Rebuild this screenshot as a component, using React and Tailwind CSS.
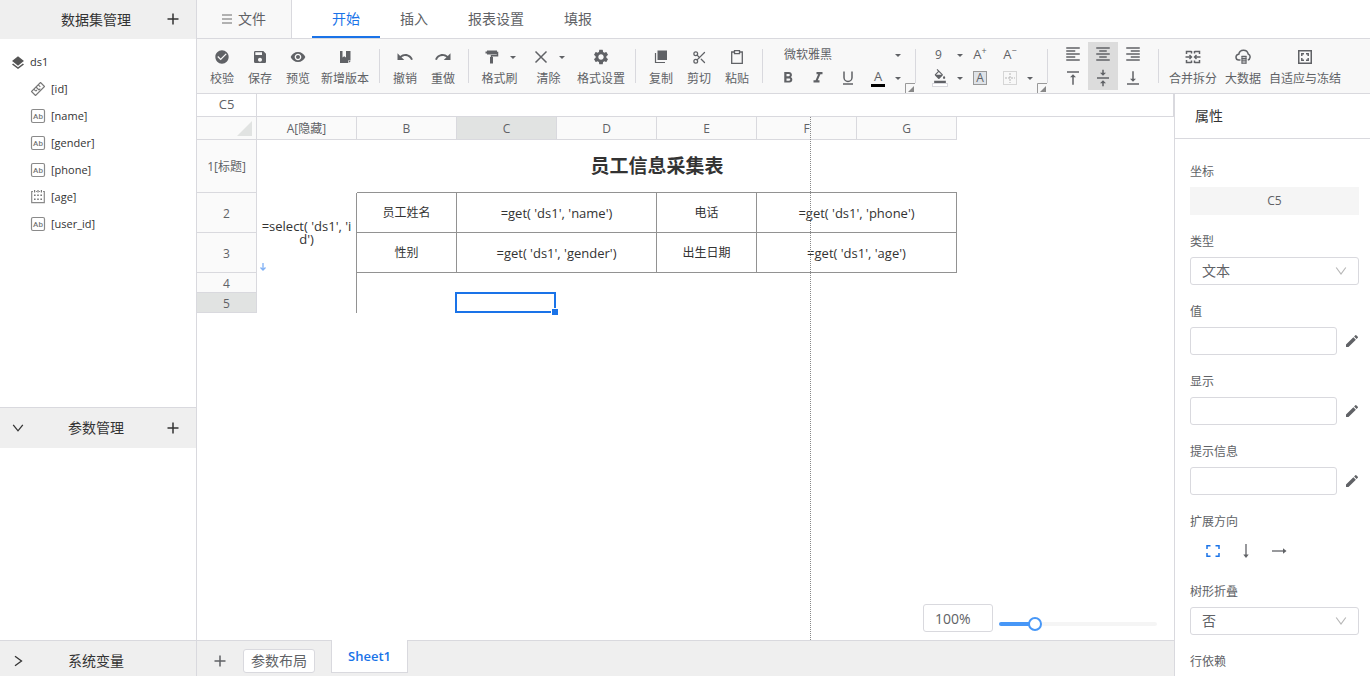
import React from "react";
import {
  MdCheckCircle,
  MdSave,
  MdVisibility,
  MdUndo,
  MdRedo,
  MdSettings,
  MdLayers,
  MdEdit,
  MdFormatAlignLeft,
  MdFormatAlignCenter,
  MdFormatAlignRight,
  MdVerticalAlignTop,
  MdVerticalAlignCenter,
  MdVerticalAlignBottom,
  MdFormatBold,
  MdFormatItalic,
  MdFormatColorFill,
} from "react-icons/md";
import { Scissors } from "lucide-react";

function Svg({ children, className = "size-4", box = 16 }) {
  return (
    <svg
      viewBox={`0 0 ${box} ${box}`}
      className={className}
      fill="none"
      stroke="currentColor"
      strokeWidth="1.5"
      aria-hidden="true"
    >
      {children}
    </svg>
  );
}

const PlusIcon = () => (
  <Svg className="size-3" box={12}>
    <path d="M6 0.5v11M0.5 6h11" />
  </Svg>
);

const Caret = () => (
  <svg viewBox="0 0 6 3" className="h-[3px] w-1.5 shrink-0" fill="currentColor" aria-hidden="true">
    <path d="M0 0h6L3 3z" />
  </svg>
);

const VersionIcon = () => (
  <Svg>
    <path fill="currentColor" stroke="none" d="M3 2h2.500v6.500L7.200 7.200 9 8.500V2h4.500v9.500h-2.500V14H3z" />
    <path fill="currentColor" stroke="none" d="M11.700 14v-2h2z" />
  </Svg>
);

const RollerIcon = () => (
  <Svg>
    <path fill="currentColor" stroke="none" d="M3 1.500h10v4H3zM1.500 2.500h2v2h-2zM6 8h3v6.500H6z" />
    <path d="M12.500 3.500h1v3.250h-6v2" />
  </Svg>
);

const ClearIcon = () => (
  <Svg>
    <path d="M2.500 2.500l11 11M13.500 2.500l-11 11" />
  </Svg>
);

const CopyIcon = () => (
  <Svg>
    <path fill="currentColor" stroke="none" d="M4.500 1.500H14V11H4.500z" />
    <path strokeWidth="1.200" d="M2.500 4v9.500h9.500" />
  </Svg>
);

const PasteIcon = () => (
  <Svg>
    <path strokeWidth="1.300" d="M5 3H2.700v11.300h10.600V3H11" />
    <path strokeWidth="1.300" d="M5.500 1.700h5v3h-5z" />
  </Svg>
);

const MergeIcon = () => (
  <Svg>
    <path d="M1.500 5V2.500h5M9.500 2.500h5V5M1.500 11v2.500h5M9.500 13.500h5V11" />
    <path strokeWidth="1.400" d="M0.500 8h5.500M15.500 8H10M4.500 6l2 2-2 2M11.500 6l-2 2 2 2" />
    <path d="M6.500 2v2.500M9.500 2v2.500M6.500 14v-2.500M9.500 14v-2.500" />
  </Svg>
);

const CloudIcon = () => (
  <Svg>
    <path d="M5.500 11H4a2.900 2.900 0 0 1-.2-5.800A4.800 4.800 0 0 1 13.200 5a3.200 3.200 0 0 1-.4 6" />
    <path strokeWidth="1.400" d="M6.500 7.500h5M6.500 9.700h5M6.500 11.900h5M6.500 14.100h5" />
    <path strokeWidth="1" d="M7 7v7.500M11 7v7.500" />
  </Svg>
);

const FitIcon = () => (
  <Svg>
    <path d="M1.750 1.750h12.500v12.500H1.750z" />
    <path d="M4.800 7V4.800H7M9 4.800h2.200V7M4.800 9v2.200H7M9 11.200h2.200V9" />
  </Svg>
);

const AbIcon = () => (
  <svg viewBox="0 0 16 16" className="mb-px size-4" aria-hidden="true">
    <rect x="1.500" y="1.500" width="13" height="13" rx="1.500" fill="none" stroke="#8a8a8a" strokeWidth="1.200" />
    <text x="8" y="11" textAnchor="middle" fontSize="8" fontFamily="Roboto, sans-serif" fontWeight="500" fill="#777">
      Ab
    </text>
  </svg>
);

const TagIcon = () => (
  <Svg className="mb-px size-4">
    <g stroke="#777" strokeWidth="1.100" strokeLinejoin="round">
      <path d="M10.500 1.500l4 4-9 9L1.500 10.500z" />
      <path d="M3.800 8.200l2 2M6 6l3 3M8.300 3.800l2 2" />
      <path d="M5.800 10.200l1.200-1.200M9 9l1.300-1.300" />
    </g>
  </Svg>
);

const NumberIcon = () => (
  <svg viewBox="0 0 16 16" className="mb-px size-4" aria-hidden="true">
    <path
      d="M3 2.500H1.700v11.200h12.600V2.500H13M6 2.500h1M9 2.500h1"
      fill="none"
      stroke="#8a8a8a"
      strokeWidth="1.200"
    />
    <g fill="#777">
      <path d="M4 1h1.200v2.500H4zM7.400 1h1.200v2.500H7.400zM10.800 1H12v2.500h-1.200z" />
      <path d="M4 5.500h1.600v1.600H4zM7.200 5.500h1.600v1.600H7.200zM10.400 5.500H12v1.600h-1.600zM4 9.500h1.600v1.600H4zM7.200 9.500h1.600v1.600H7.200zM10.400 9.500H12v1.600h-1.600z" />
    </g>
  </svg>
);

const UnderlineIcon = () => (
  <Svg>
    <path d="M4 1.500v6a4 4 0 0 0 8 0v-6M3 14h10" />
  </Svg>
);

const ChevronDown = ({ className }) => (
  <Svg className={className} box={12}>
    <path strokeWidth="1.200" d="M1.200 2.500L6 9l4.800-6.500" />
  </Svg>
);

const FoldIcon = () => (
  <Svg className="size-3" box={12}>
    <path strokeWidth="1.300" d="M1.200 2.800L6 8.800l4.800-6" />
  </Svg>
);

const ChevronRight = () => (
  <Svg className="size-3" box={12}>
    <path strokeWidth="1.300" d="M3 1.200L9.500 6 3 10.800" />
  </Svg>
);

const Separator = () => <div className="mx-1.5 h-[34px] w-px shrink-0 bg-[#d9d9de]" />;

function Tool({ icon, label, width = "min-w-[38px]", caret = false }) {
  return (
    <button className={`flex shrink-0 flex-col items-center gap-1 px-1 pt-1.5 ${width}`}>
      <span className="flex h-4 items-center gap-2.5">
        {icon}
        {caret && <Caret />}
      </span>
      <span className="whitespace-nowrap text-xs leading-5">{label}</span>
    </button>
  );
}

function Small({ label, children, active = false }) {
  return (
    <button
      aria-label={label}
      className={`flex h-6 w-[30px] shrink-0 items-center justify-center ${active ? "bg-[#dcdcdc]" : ""}`}
    >
      {children}
    </button>
  );
}

function CaretButton({ label }) {
  return (
    <button aria-label={label} className="flex h-6 w-2.5 shrink-0 items-center justify-center">
      <Caret />
    </button>
  );
}

function Launcher({ label }) {
  return (
    <button aria-label={label} className="absolute right-0 bottom-0">
      <svg viewBox="0 0 10 10" className="size-2.5" aria-hidden="true">
        <path d="M0.500 10V0.500H10" fill="none" stroke="#999" />
        <path d="M9 3v6H3z" fill="#888" />
      </svg>
    </button>
  );
}

const fields = [
  { name: "[id]", icon: <TagIcon /> },
  { name: "[name]", icon: <AbIcon /> },
  { name: "[gender]", icon: <AbIcon /> },
  { name: "[phone]", icon: <AbIcon /> },
  { name: "[age]", icon: <NumberIcon /> },
  { name: "[user_id]", icon: <AbIcon /> },
];

function Sidebar() {
  return (
    <aside className="flex w-[197px] shrink-0 flex-col border-r border-[#d9d9de] text-[#333]">
      <div className="grid h-[39px] shrink-0 grid-cols-[36px_1fr_46px] items-center bg-[#efefef]">
        <span />
        <h2 className="pl-1.5 text-center text-sm">数据集管理</h2>
        <button aria-label="新增数据集" className="flex justify-center pb-0.5">
          <PlusIcon />
        </button>
      </div>
      <div className="min-h-0 flex-1 overflow-hidden pt-2.5">
        <div className="flex h-[27px] items-center gap-1 pl-2.5 text-[11px]">
          <MdLayers className="size-4 text-[#555]" />
          ds1
        </div>
        <ul>
          {fields.map((f) => (
            <li key={f.name} className="flex h-[27px] items-center gap-[5px] pl-[30px] text-[11px]">
              {f.icon}
              <span>{f.name}</span>
            </li>
          ))}
        </ul>
      </div>
      <div className="grid h-[41px] shrink-0 grid-cols-[36px_1fr_46px] items-center border-t border-[#d9d9de] bg-[#efefef]">
        <button aria-label="折叠" className="flex justify-center">
          <FoldIcon />
        </button>
        <h2 className="pl-1.5 text-center text-sm">参数管理</h2>
        <button aria-label="新增参数" className="flex justify-center">
          <PlusIcon />
        </button>
      </div>
      <div className="h-48 shrink-0" />
      <div className="grid h-9 shrink-0 grid-cols-[36px_1fr_46px] items-start border-t border-[#d9d9de] bg-[#efefef] pt-2.5">
        <button aria-label="展开" className="flex h-5 items-center justify-center">
          <ChevronRight />
        </button>
        <h2 className="pl-1.5 text-center text-sm leading-5">系统变量</h2>
        <span />
      </div>
    </aside>
  );
}

function Tabs() {
  return (
    <nav className="flex h-[39px] shrink-0 border-b border-[#d9d9de] text-sm text-[#606266]">
      <button className="mr-5 flex w-[95px] items-center justify-center gap-1.5 border-r border-[#d9d9de] bg-[#f8f8f8]">
        <Svg className="size-2.5 text-[#999]" box={10}>
          <path d="M0 1h10M0 5h10M0 9h10" />
        </Svg>
        文件
      </button>
      <button className="border-b-2 border-[#1a73e8] px-5 pt-0.5 text-[#1a73e8]">开始</button>
      <button className="px-5">插入</button>
      <button className="px-5">报表设置</button>
      <button className="px-5">填报</button>
    </nav>
  );
}

function Toolbar() {
  return (
    <div className="flex h-[55px] shrink-0 items-center overflow-hidden border-b border-[#d9d9de] bg-[#f8f8f8] pl-1.5 text-[#606266]">
      <Tool icon={<MdCheckCircle className="size-4" />} label="校验" />
      <Tool icon={<MdSave className="size-4" />} label="保存" />
      <Tool icon={<MdVisibility className="size-4" />} label="预览" />
      <Tool icon={<VersionIcon />} label="新增版本" />
      <Separator />
      <Tool icon={<MdUndo className="size-[18px]" />} label="撤销" />
      <Tool icon={<MdRedo className="size-[18px]" />} label="重做" />
      <Separator />
      <Tool icon={<RollerIcon />} label="格式刷" width="w-[49px]" caret />
      <Tool icon={<ClearIcon />} label="清除" width="w-[49px]" caret />
      <Tool icon={<MdSettings className="size-[18px]" />} label="格式设置" />
      <Separator />
      <Tool icon={<CopyIcon />} label="复制" />
      <Tool icon={<Scissors className="size-[15px]" />} label="剪切" />
      <Tool icon={<PasteIcon />} label="粘贴" />
      <Separator />

      <div className="relative flex h-[54px] w-[146px] shrink-0 flex-col justify-center pl-1">
        <div className="flex h-6 items-center pt-0.5">
          <select aria-label="字体" className="w-30 appearance-none bg-transparent pl-[11px] text-xs">
            <option>微软雅黑</option>
          </select>
          <span className="flex w-2.5 justify-center">
            <Caret />
          </span>
        </div>
        <div className="flex h-6 items-center">
          <Small label="加粗">
            <MdFormatBold className="size-[18px]" />
          </Small>
          <Small label="斜体">
            <MdFormatItalic className="size-[18px]" />
          </Small>
          <Small label="下划线">
            <UnderlineIcon />
          </Small>
          <Small label="字体颜色">
            <span className="border-b-3 border-black px-[3px] text-[13px] leading-[15px]">A</span>
          </Small>
          <CaretButton label="更多字体颜色" />
        </div>
        <Launcher label="字体设置" />
      </div>
      <div className="h-[34px] w-px shrink-0 bg-[#d9d9de]" />
      <div className="relative flex h-[54px] w-[131px] shrink-0 flex-col justify-center pl-[9px]">
        <div className="flex h-6 items-center pt-0.5">
          <select aria-label="字号" className="w-[30px] appearance-none bg-transparent pl-2.5 text-xs">
            <option>9</option>
          </select>
          <span className="flex w-2.5 justify-center">
            <Caret />
          </span>
          <Small label="增大字号">
            <span className="text-[13px]">A</span>
            <sup className="text-[9px]">+</sup>
          </Small>
          <Small label="减小字号">
            <span className="text-[13px]">A</span>
            <sup className="text-[9px]">−</sup>
          </Small>
        </div>
        <div className="flex h-6 items-center">
          <Small label="填充颜色">
            <span className="flex flex-col items-center">
              <MdFormatColorFill className="size-3.5" />
              <span className="h-1 w-4 border border-[#d9d9de] bg-white" />
            </span>
          </Small>
          <CaretButton label="更多填充颜色" />
          <Small label="背景">
            <span className="flex size-3.5 items-center justify-center border border-[#999] bg-[#dfe3e8] text-xs">A</span>
          </Small>
          <Small label="边框">
            <Svg className="size-3.5 text-[#b5b5b5]" box={14}>
              <path strokeWidth="1" strokeDasharray="1 1" d="M.5.5h13v13H.5z" />
              <path strokeWidth="1" strokeDasharray="2 1" d="M7 2v10M2 7h10" />
            </Svg>
          </Small>
          <CaretButton label="更多边框" />
        </div>
        <Launcher label="单元格设置" />
      </div>
      <div className="mr-2.5 h-[34px] w-px shrink-0 bg-[#d9d9de]" />
      <div className="grid shrink-0 grid-cols-3">
        <Small label="左对齐">
          <MdFormatAlignLeft className="size-[18px]" />
        </Small>
        <Small label="居中对齐" active>
          <MdFormatAlignCenter className="size-[18px]" />
        </Small>
        <Small label="右对齐">
          <MdFormatAlignRight className="size-[18px]" />
        </Small>
        <Small label="顶端对齐">
          <MdVerticalAlignTop className="size-[18px]" />
        </Small>
        <Small label="垂直居中" active>
          <MdVerticalAlignCenter className="size-[18px]" />
        </Small>
        <Small label="底端对齐">
          <MdVerticalAlignBottom className="size-[18px]" />
        </Small>
      </div>
      <div className="ml-1 flex items-center">
        <Separator />
        <Tool icon={<MergeIcon />} label="合并拆分" />
        <Tool icon={<CloudIcon />} label="大数据" />
        <Tool icon={<FitIcon />} label="自适应与冻结" />
      </div>
    </div>
  );
}

const columns = ["A[隐藏]", "B", "C", "D", "E", "F", "G"];
const boxed = "border-r border-b border-[#929292] p-0";

function RowHead({ children, active = false }) {
  return (
    <th
      scope="row"
      className={`border-r border-b border-[#d9d9de] p-0 pt-0.5 font-normal text-[#606266] ${active ? "bg-[#e1e3e2]" : "bg-[#fafafa]"}`}
    >
      {children}
    </th>
  );
}

function Formula({ children }) {
  return <span className="block text-[13px] leading-4">{children}</span>;
}

function Sheet() {
  return (
    <table className="w-[760px] table-fixed border-separate border-spacing-0 text-center text-xs text-[#333]">
      <colgroup>
        <col className="w-[60px]" />
        {columns.map((c) => (
          <col key={c} className="w-[100px]" />
        ))}
      </colgroup>
      <thead>
        <tr className="h-[23px] text-[#606266]">
          <td className="border-r border-b border-[#d9d9de] bg-[#fafafa] p-0">
            <svg viewBox="0 0 15 15" className="mr-1 ml-auto size-[15px] text-[#e1e3e2]" fill="currentColor" aria-hidden="true">
              <path d="M15 0v15H0z" />
            </svg>
          </td>
          {columns.map((c) => (
            <th
              key={c}
              scope="col"
              className={`border-r border-b border-[#d9d9de] p-0 pt-0.5 font-normal ${c === "C" ? "bg-[#e1e3e2]" : "bg-[#fafafa]"}`}
            >
              {c}
            </th>
          ))}
        </tr>
      </thead>
      <tbody>
        <tr className="h-[53px]">
          <RowHead>1[标题]</RowHead>
          <td className="p-0" />
          <td colSpan={6} className="border-b border-[#929292] p-0 pt-0.5 text-[19px] font-bold">
            员工信息采集表
          </td>
        </tr>
        <tr className="h-10">
          <RowHead>2</RowHead>
          <td rowSpan={2} className="relative border-r border-[#929292] p-0 px-1 text-[13px] leading-[13px] break-all">
            =select( 'ds1', 'id')
            <svg viewBox="0 0 8 8" className="absolute bottom-0.5 left-0.5 size-2" fill="none" stroke="#7fb0f5" strokeWidth="1.3" aria-hidden="true">
              <path d="M4 0v7M1.500 4.500L4 7l2.500-2.500" />
            </svg>
          </td>
          <td className={boxed}>员工姓名</td>
          <td colSpan={2} className={boxed}>
            <Formula>=get( 'ds1', 'name')</Formula>
          </td>
          <td className={boxed}>电话</td>
          <td colSpan={2} className={boxed}>
            <Formula>=get( 'ds1', 'phone')</Formula>
          </td>
        </tr>
        <tr className="h-10">
          <RowHead>3</RowHead>
          <td className={boxed}>性别</td>
          <td colSpan={2} className={boxed}>
            <Formula>=get( 'ds1', 'gender')</Formula>
          </td>
          <td className={boxed}>出生日期</td>
          <td colSpan={2} className={boxed}>
            <Formula>=get( 'ds1', 'age')</Formula>
          </td>
        </tr>
        <tr className="h-5">
          <RowHead>4</RowHead>
          <td className="border-r border-[#929292] p-0" />
          <td colSpan={6} className="p-0" />
        </tr>
        <tr className="h-5">
          <RowHead active>5</RowHead>
          <td className="border-r border-[#929292] p-0" />
          <td className="p-0" />
          <td className="relative p-0">
            <div className="absolute -top-px right-px bottom-0 -left-0.5 border-2 border-[#1a73e8]">
              <span className="absolute -right-1 -bottom-1 size-[7px] border-t border-l border-white bg-[#1a73e8]" />
            </div>
          </td>
          <td colSpan={4} className="p-0" />
        </tr>
      </tbody>
    </table>
  );
}

function Workspace() {
  return (
    <section className="flex min-w-0 flex-1 flex-col">
      <div className="flex h-[23px] shrink-0 border-b border-[#d9d9de] text-[13px] text-[#606266]">
        <span className="flex w-[60px] items-center justify-center border-r border-[#d9d9de]">C5</span>
        <input aria-label="公式" className="min-w-0 flex-1 border-r border-[#d9d9de] px-2 outline-none" />
      </div>
      <div className="relative min-h-0 flex-1 overflow-hidden">
        <Sheet />
        <div className="absolute inset-y-0 left-[613px] border-l border-dotted border-[#888]" />
        <div className="absolute right-[17px] bottom-2 flex items-center gap-1.5">
          <input
            aria-label="缩放比例"
            defaultValue="100%"
            className="h-7 w-[70px] rounded-[3px] border border-[#d9d9de] bg-white px-[11px] text-sm text-[#606266]"
          />
          <input
            type="range"
            aria-label="缩放"
            min="0"
            max="500"
            defaultValue="100"
            className="mt-3 h-1 w-[158px] appearance-none rounded-full bg-[linear-gradient(to_right,#4797f7_23%,#f5f5f5_23%)] [&::-webkit-slider-thumb]:size-3.5 [&::-webkit-slider-thumb]:appearance-none [&::-webkit-slider-thumb]:rounded-full [&::-webkit-slider-thumb]:border-2 [&::-webkit-slider-thumb]:border-[#4797f7] [&::-webkit-slider-thumb]:bg-white"
          />
        </div>
      </div>
      <footer className="flex h-9 shrink-0 items-start bg-[#efefef] text-[#606266]">
        <div className="flex h-full w-[134px] items-center border-t border-[#d9d9de] pt-1 pl-[17px]">
          <button aria-label="新增工作表">
            <PlusIcon />
          </button>
          <button className="ml-[17px] h-6 w-[72px] rounded-[3px] border border-[#d9d9de] bg-white text-sm leading-5">
            参数布局
          </button>
        </div>
        <button className="h-[33px] w-[77px] border-x border-b border-[#d9d9de] bg-white pt-0.5 text-[13px] font-semibold text-[#1a73e8]">
          Sheet1
        </button>
        <div className="h-full flex-1 border-t border-[#d9d9de]" />
      </footer>
    </section>
  );
}

function SelectField({ id, label, value }) {
  return (
    <div>
      <label htmlFor={id} className="mb-[5px] block text-xs leading-5">
        {label}
      </label>
      <div className="relative">
        <select id={id} className="h-7 w-full appearance-none rounded-[3px] border border-[#d9d9de] bg-white px-[11px] text-sm">
          <option>{value}</option>
        </select>
        <ChevronDown className="pointer-events-none absolute top-2 right-3 size-3 text-[#b8b8b8]" />
      </div>
    </div>
  );
}

function TextField({ id, label }) {
  return (
    <div>
      <label htmlFor={id} className="mb-[5px] block text-xs leading-5">
        {label}
      </label>
      <div className="-mr-px flex items-center gap-[7px]">
        <input id={id} className="h-7 min-w-0 flex-1 rounded-[3px] border border-[#d9d9de] bg-white px-2 text-sm" />
        <button aria-label={`编辑${label}`}>
          <MdEdit className="size-4" />
        </button>
      </div>
    </div>
  );
}

function Properties() {
  return (
    <aside className="flex w-[196px] shrink-0 flex-col overflow-hidden border-l border-[#d9d9de] text-[#606266]">
      <h2 className="flex h-[45px] shrink-0 items-center border-b border-[#d9d9de] pl-5 text-sm text-[#333]">属性</h2>
      <div className="flex min-h-0 flex-1 flex-col gap-[17px] pt-[23px] pr-[11px] pl-[15px]">
        <div>
          <div className="mb-[5px] text-xs leading-5">坐标</div>
          <output className="flex h-7 items-center justify-center bg-[#f5f5f5] text-xs">C5</output>
        </div>
        <SelectField id="type" label="类型" value="文本" />
        <TextField id="value" label="值" />
        <TextField id="display" label="显示" />
        <TextField id="tip" label="提示信息" />
        <div>
          <div className="mb-[5px] text-xs leading-5">扩展方向</div>
          <div className="flex h-7 items-center gap-[17px] pl-[15px]">
            <button aria-label="不扩展" className="text-[#1a73e8]">
              <Svg>
                <path d="M2 6V2.700h3.500M10.500 2.700H14V6M2 10v3.300h3.500M10.500 13.300H14V10" />
              </Svg>
            </button>
            <button aria-label="纵向扩展">
              <Svg>
                <path strokeWidth="1.300" d="M8 1v12" />
                <path fill="currentColor" stroke="none" d="M5.300 11.500h5.400L8 15z" />
              </Svg>
            </button>
            <button aria-label="横向扩展">
              <Svg>
                <path strokeWidth="1.300" d="M1 8h12" />
                <path fill="currentColor" stroke="none" d="M12 5.300v5.400l3.500-2.700z" />
              </Svg>
            </button>
          </div>
        </div>
        <SelectField id="tree" label="树形折叠" value="否" />
        <SelectField id="row-dep" label="行依赖" value="默认" />
      </div>
    </aside>
  );
}

export default function App() {
  return (
    <div className="flex h-screen overflow-hidden bg-white font-['Open_Sans','Noto_Sans_CJK_SC',sans-serif]">
      <Sidebar />
      <div className="flex min-w-0 flex-1 flex-col">
        <Tabs />
        <Toolbar />
        <div className="flex min-h-0 flex-1">
          <Workspace />
          <Properties />
        </div>
      </div>
    </div>
  );
}
